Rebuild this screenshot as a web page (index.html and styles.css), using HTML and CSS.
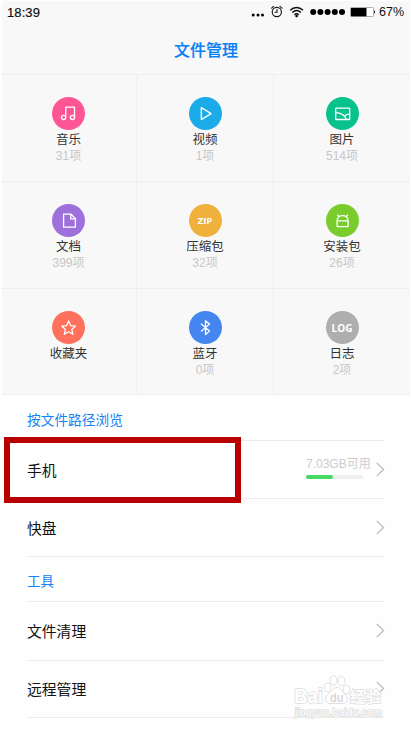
FILE: index.html
```html
<!DOCTYPE html>
<html lang="zh-CN">
<head>
<meta charset="utf-8">
<title>文件管理</title>
<link rel="stylesheet" href="styles.css">
</head>
<body>
<div class="screen">
  <header class="top">
    <div class="status">
      <span class="time">18:39</span>
      <svg class="status-icons" width="124" height="16" viewBox="0 0 124 16">
        <circle cx="2.2" cy="11" r="1.5"/><circle cx="7" cy="11" r="1.5"/><circle cx="11.5" cy="11" r="1.5"/>
        <g fill="none" stroke="#111" stroke-width="1.1" stroke-linecap="round">
          <circle cx="25.8" cy="8" r="4.6"/>
          <path d="M20.6 4.2l2-1.800M31 4.200l-2-1.800M26 5.500v2.800h-2"/>
          <path d="M39.2 6.2c3.8-3.7 9-3.7 12.8 0M41.3 8.5c2.6-2.5 6-2.5 8.6 0M43.4 10.7c1.4-1.2 3-1.2 4.4 0" stroke-width="1.4" stroke-linecap="butt"/>
        </g>
        <circle cx="45.6" cy="12" r="1.3"/>
        <circle cx="62.2" cy="8" r="3"/><circle cx="69.4" cy="8" r="3"/><circle cx="76.6" cy="8" r="3"/><circle cx="83.8" cy="8" r="3"/><circle cx="91" cy="8" r="3"/>
        <rect x="99.5" y="3.500" width="23" height="9" rx="1" fill="#fff" stroke="#999" stroke-width=".8"/>
        <rect x="100" y="4" width="15.5" height="8.3"/>
        <path d="M123 6.3c1.3.5 1.3 3 0 3.500z"/>
      </svg>
      <span class="percent">67%</span>
    </div>
    <h1>文件管理</h1>
  </header>

  <main>
    <section class="grid">
      <div class="cell"><i class="disc pink"><svg viewBox="0 0 33 33"><path d="M13.700 20.300V10.200h8.800v10"/><circle cx="11.6" cy="20.4" r="2.1"/><circle cx="20.5" cy="20.4" r="2.1"/></svg></i><b>音乐</b><small>31项</small></div>
      <div class="cell"><i class="disc cyan"><svg viewBox="0 0 33 33"><path d="M12.3 10.6v12l9.8-6z"/></svg></i><b>视频</b><small>1项</small></div>
      <div class="cell"><i class="disc teal"><svg viewBox="0 0 33 33"><rect x="9.7" y="11.2" width="14" height="11.3" rx=".6"/><path d="M9.700 15.600c5 .2 9 2.400 10.800 6.900M18.400 19.400c.8-1.500 2.600-2.400 5.200-2.200"/></svg></i><b>图片</b><small>514项</small></div>
      <div class="cell"><i class="disc purple"><svg viewBox="0 0 33 33"><path d="M11.6 10.2h7.5l4.3 4.4v8.6H11.6zM18.8 10.4v4.5h4.4"/></svg></i><b>文档</b><small>399项</small></div>
      <div class="cell"><i class="disc amber"><span class="zip">ZIP</span></i><b>压缩包</b><small>32项</small></div>
      <div class="cell"><i class="disc green"><svg viewBox="0 0 33 33"><path d="M11.100 16.800c0-7 11-7 11 0v5.800h-11zM11.100 16.900h11M11.300 10.800l1.700 1.900M21.900 10.800l-1.700 1.900"/></svg></i><b>安装包</b><small>26项</small></div>
      <div class="cell"><i class="disc coral"><svg viewBox="0 0 33 33"><path d="M16.600 10l2 4.600 4.900.5-3.700 3.300 1.100 4.900-4.300-2.500-4.300 2.500 1.100-4.900-3.700-3.300 4.900-.5z"/></svg></i><b>收藏夹</b></div>
      <div class="cell"><i class="disc blue"><svg viewBox="0 0 33 33"><path d="M12 12.800l8.500 7.300-4 3.400V9.700l4 3.400-8.500 7.300"/></svg></i><b>蓝牙</b><small>0项</small></div>
      <div class="cell"><i class="disc gray"><span class="log">LOG</span></i><b>日志</b><small>2项</small></div>
    </section>

    <section class="list">
      <h2>按文件路径浏览</h2>
      <div class="row"><span>手机</span>
        <div class="storage"><span>7.03GB可用</span><div class="meter"><div class="used"></div></div></div>
        <svg class="chevron" viewBox="0 0 9 15"><path d="M.8.8l6.700 6.700-6.700 6.700"/></svg></div>
      <div class="row"><span>快盘</span><svg class="chevron" viewBox="0 0 9 15"><path d="M.8.8l6.700 6.700-6.700 6.700"/></svg></div>
      <h2 class="tools">工具</h2>
      <div class="row"><span>文件清理</span><svg class="chevron" viewBox="0 0 9 15"><path d="M.8.8l6.700 6.700-6.700 6.700"/></svg></div>
      <div class="row"><span>远程管理</span><svg class="chevron" viewBox="0 0 9 15"><path d="M.8.8l6.700 6.700-6.700 6.700"/></svg></div>
    </section>
  </main>

  <div class="highlight"></div>
  <svg class="watermark" width="100" height="50" viewBox="0 0 100 50">
    <g fill="#fff" fill-opacity=".75" stroke="#e0e0e0" stroke-width="1">
      <ellipse cx="38.500" cy="16.500" rx="3.200" ry="4.500"/><ellipse cx="44.500" cy="9.500" rx="3.400" ry="4.800"/><ellipse cx="52.500" cy="10" rx="3.400" ry="4.800"/><ellipse cx="57.500" cy="18.500" rx="3.200" ry="4.500"/>
      <path d="M48 16.500c4 0 5 4 8 7 5 5 1 10-4 9h-9c-6 1-9-5-4-9 3-3 5-7 9-7z"/>
    </g>
    <g class="mark">
      <text x="5" y="32" font-size="19.500" textLength="29" lengthAdjust="spacingAndGlyphs">Bai</text>
      <text class="du" x="41" y="30.500" font-size="12" textLength="13.500" lengthAdjust="spacingAndGlyphs">du</text>
      <text x="61" y="31" font-size="15" textLength="31">经验</text>
      <text class="site" x="6" y="45" font-size="10" textLength="87" lengthAdjust="spacingAndGlyphs">jingyan.baidu.com</text>
    </g>
  </svg>
</div>
</body>
</html>
```
FILE: styles.css
```css
* { box-sizing: border-box; }
body {
  margin: 0;
  background: #fefefe;
  font-family: "Liberation Sans", "Noto Sans CJK SC", sans-serif;
}
.screen {
  position: relative;
  width: 411px;
  height: 730px;
  padding: 1px 1px 0 2px;
  overflow: hidden;
}
.top {
  height: 73px;
  background: #f8f8f8;
}
.status {
  display: flex;
  align-items: center;
  height: 22px;
  padding: 0 5px;
  color: #111;
}
.time { font-size: 13px; letter-spacing: .1px; -webkit-text-stroke: .2px #111; }
.status-icons { margin-left: auto; margin-right: 4px; fill: #000; overflow: visible; }
.percent { font-size: 12.5px; width: 26px; white-space: nowrap; }
h1 {
  margin: 15px 0 0;
  font-size: 16px;
  line-height: 25px;
  font-weight: 500;
  text-align: center;
  color: #0a80f5;
  -webkit-text-stroke: .2px #0a80f5;
}
.grid {
  display: grid;
  grid-template-columns: 135px 137px 136px;
  grid-template-rows: 107px 107px 106px;
  border-bottom: 1px solid #f0f0f0;
  background: #f8f8f8;
}
.cell {
  display: flex;
  flex-direction: column;
  align-items: center;
  padding-top: 22px;
  border-top: 1px solid #eee;
  border-right: 1px solid #efefef;
}
.cell:nth-child(3n) { border-right: 0; }
.cell:nth-child(3n+1) { padding-right: 1px; }
.disc {
  display: flex;
  flex-shrink: 0;
  align-items: center;
  justify-content: center;
  width: 33px;
  height: 33px;
  margin-bottom: 1px;
  border-radius: 50%;
  font-style: normal;
}
.disc svg {
  width: 33px;
  height: 33px;
  fill: none;
  stroke: #fff;
  stroke-width: 1.3;
  stroke-linejoin: round;
}
.disc span {
  color: #fff;
  font-family: "Open Sans", sans-serif;
  font-weight: 700;
}
.zip { font-size: 9.5px; }
.log { font-size: 10px; }
.pink { background: #ff5595; }
.cyan { background: #1aabe8; }
.teal { background: #08c18d; }
.purple { background: #9d70dc; }
.amber { background: #efb03c; }
.green { background: #79cc2b; }
.coral { background: #ff715c; }
.blue { background: #4485f0; }
.gray { background: #aeaeae; }
.cell b {
  font-weight: 400;
  font-size: 12.5px;
  line-height: 18px;
  color: #333;
}
.cell small {
  font-size: 12px;
  line-height: 15px;
  color: #c7c7c7;
}
.list { padding: 0 26px 0 25px; }
h2 {
  margin: 0;
  height: 45px;
  line-height: 52px;
  font-size: 13.7px;
  font-weight: 400;
  color: #1583f5;
}
.tools {
  border-top: 1px solid #ececec;
  line-height: 49px;
  font-size: 13.5px;
}
.row {
  display: flex;
  align-items: center;
  height: 58px;
  border-top: 1px solid #ececec;
  font-size: 14.8px;
  color: #111;
}
.tools ~ .row { height: 58.5px; }
.row:last-child { border-bottom: 1px solid #ececec; }
.storage {
  width: 66px;
  margin-left: auto;
  margin-right: 4px;
  padding-bottom: 3px;
}
.storage span {
  display: block;
  font-size: 12px;
  line-height: 15px;
  white-space: nowrap;
  color: #ccc;
}
.meter {
  width: 57px;
  height: 4px;
  margin-top: 3px;
  border-radius: 2px;
  background: #eee;
}
.used {
  width: 27px;
  height: 4px;
  border-radius: 2px;
  background: #48d962;
}
.chevron {
  width: 9px;
  height: 15px;
  margin-right: -1px;
  margin-bottom: 1px;
  fill: none;
  stroke: #b8b8b8;
  stroke-width: 1.2;
}
.row > span + .chevron { margin-left: auto; }
.highlight {
  position: absolute;
  left: 3.5px;
  top: 437px;
  width: 237px;
  height: 66px;
  border: 6px solid #b90000;
}
.watermark {
  position: absolute;
  left: 289px;
  top: 671px;
}
.mark {
  fill: #fff;
  stroke: #dedede;
  stroke-width: 1.6;
  paint-order: stroke;
  font-weight: 700;
}
.du { fill: #d9d9d9; stroke: none; }
.site { font-weight: 400; }
```
